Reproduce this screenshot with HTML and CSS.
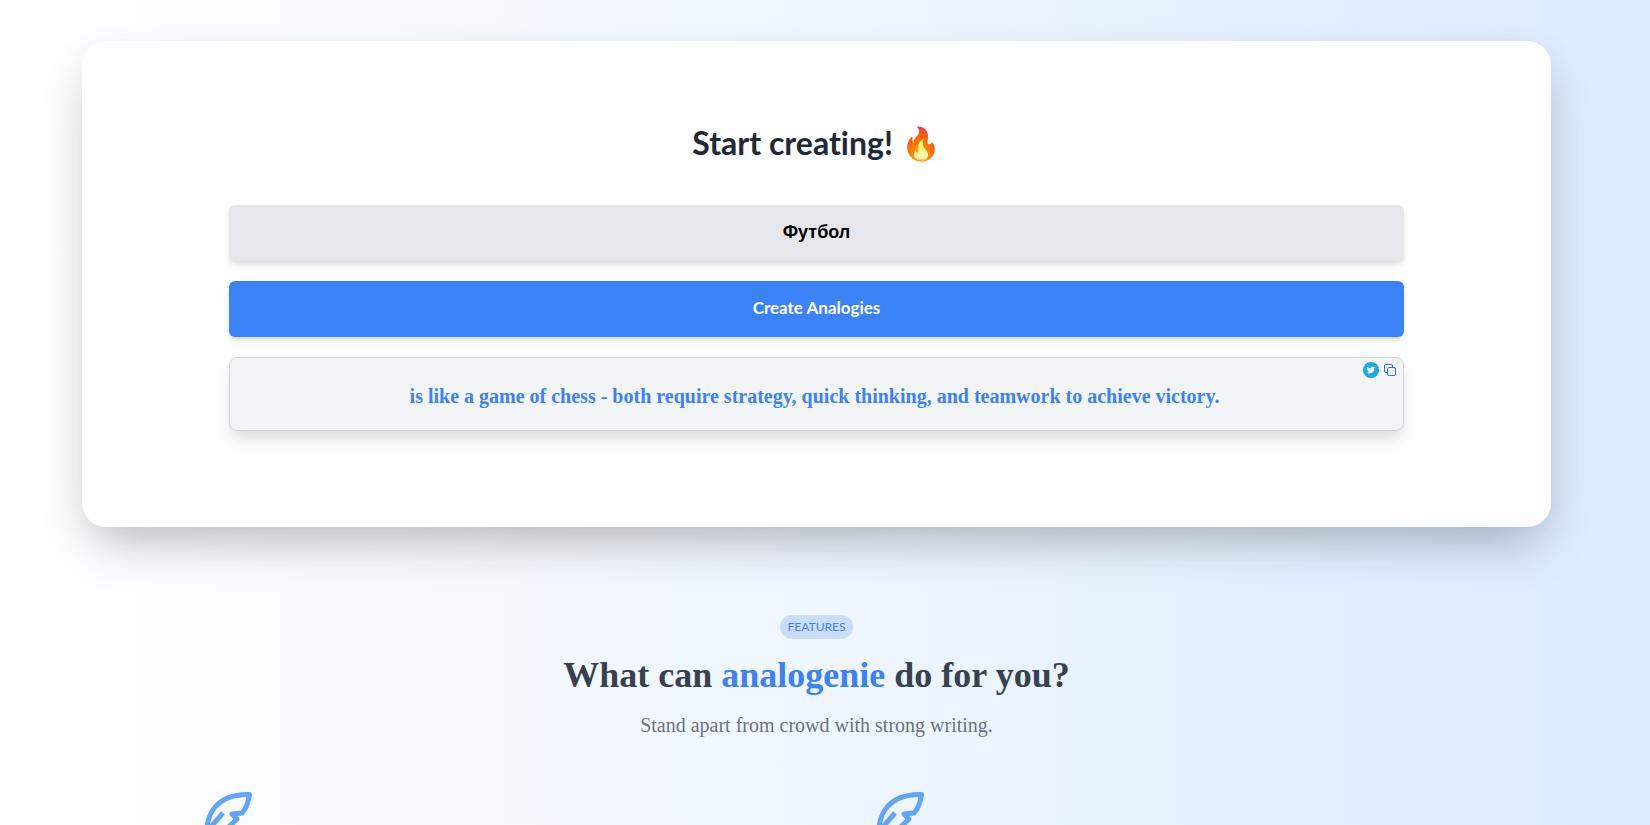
FILE: index.html
```html
<!DOCTYPE html>
<html lang="en">
<head>
    <meta charset="UTF-8">
    <title>analogenie</title>
    <link rel="stylesheet" href="styles.css">
</head>
<body>
    <main class="page">
        <!-- Generator -->
        <form class="creator" id="creator">
            <h2 class="creator-title">Start creating! 🔥</h2>
            <input type="text" class="topic-input" id="topic" aria-label="Topic" value="Футбол">
            <button type="submit" class="create-btn">Create Analogies</button>
            <div class="result">
                <div class="result-actions">
                    <a href="#" aria-label="Tweet">
                        <svg width="16" height="16" viewBox="0 0 16 16">
                            <circle cx="8" cy="8" r="8" fill="#1aa9e6"/>
                            <path fill="#fff" d="M12.2 5.3c-.3.15-.65.24-1 .28.36-.2.63-.55.76-.95-.33.2-.7.34-1.1.42a1.72 1.72 0 0 0-2.95 1.57 4.9 4.9 0 0 1-3.55-1.8 1.72 1.72 0 0 0 .53 2.3c-.28 0-.54-.08-.78-.21 0 .85.6 1.55 1.38 1.7-.25.07-.52.08-.78.03.22.69.86 1.18 1.61 1.2A3.47 3.47 0 0 1 3.8 10.55a4.88 4.88 0 0 0 7.54-4.34c.34-.25.63-.56.86-.91z"/>
                        </svg>
                    </a>
                    <button type="button" class="copy-btn" aria-label="Copy">
                        <svg width="12" height="12" viewBox="0 0 12 12" fill="none" stroke="#3b70d8">
                            <rect x="3.5" y="3.5" width="8" height="8" rx="1.5"/>
                            <path d="M3.5 8.5H2A1.5 1.5 0 0 1 .5 7V2A1.5 1.5 0 0 1 2 .5h5A1.5 1.5 0 0 1 8.5 2v1.5"/>
                        </svg>
                    </button>
                </div>
                <p class="result-text">is like a game of chess - both require strategy, quick thinking, and teamwork to achieve victory.</p>
            </div>
        </form>

        <!-- Features -->
        <section class="features">
            <span class="badge">FEATURES</span>
            <h1 class="features-title">What can <span class="brand">analogenie</span> do for you?</h1>
            <p class="features-text">Stand apart from crowd with strong writing.</p>
            <div class="feature-grid">
                <div class="feature">
                    <svg class="feather" viewBox="0 0 48 48">
                        <path d="M3 46C1 20 14 2 45.500 2.500C44 12 41 18 38 21L28 22L33 27L14 45"/>
                        <path d="M5 37L19 21"/>
                    </svg>
                </div>
                <div class="feature">
                    <svg class="feather" viewBox="0 0 48 48">
                        <path d="M3 46C1 20 14 2 45.500 2.500C44 12 41 18 38 21L28 22L33 27L14 45"/>
                        <path d="M5 37L19 21"/>
                    </svg>
                </div>
            </div>
        </section>
    </main>
</body>
</html>
```
FILE: styles.css
```css
* {
    box-sizing: border-box;
}

body {
    margin: 0;
    height: 100vh;
    overflow: hidden;
    font-family: "Liberation Serif", serif;
    background: linear-gradient(to right, #ffffff, #eff6ff 50%, #dbeafe);
}

.page {
    padding: 41px 17px 0 0;
}

.creator {
    display: flex;
    flex-direction: column;
    gap: 20px;
    width: 90%;
    margin: 0 auto;
    padding: 80px 147px 96px;
    background-color: #fefefe;
    border-radius: 24px;
    box-shadow: 0 25px 50px -12px rgba(0, 0, 0, 0.25), 0 8px 40px rgba(0, 0, 0, 0.04);
}

.creator-title {
    margin: 0 0 20px;
    font-family: Lato, sans-serif;
    font-size: 32px;
    font-variant-ligatures: none;
    line-height: 44px;
    text-align: center;
    color: #1f2937;
}

.topic-input,
.create-btn {
    width: 100%;
    height: 56px;
    border: none;
    border-radius: 6px;
    text-align: center;
    box-shadow: 0 4px 6px -1px rgba(0, 0, 0, 0.15);
}

.topic-input {
    padding: 0 16px 2px;
    background-color: #e5e7eb;
    color: #000;
    font-family: "Liberation Sans", sans-serif;
    font-size: 18px;
    font-weight: bold;
}

.create-btn {
    padding: 0 16px 4px;
    background-color: #3b82f6;
    color: #fff;
    font-family: Lato, sans-serif;
    font-size: 17px;
    font-weight: bold;
    cursor: pointer;
}

.result {
    position: relative;
    padding: 24px 24px 22px;
    border: 1px solid #d1d5db;
    border-radius: 8px;
    background-color: #f3f4f6;
    box-shadow: 0 10px 15px -3px rgba(0, 0, 0, 0.15);
}

.result-actions {
    position: absolute;
    top: 4px;
    right: 7px;
    display: flex;
    align-items: center;
    gap: 5px;
}

.result-actions svg {
    display: block;
}

.copy-btn {
    padding: 0;
    border: none;
    background: none;
    cursor: pointer;
}

.result-text {
    margin: 0;
    padding: 2px 4px 0 0;
    font-size: 20px;
    font-weight: bold;
    line-height: 24px;
    text-align: center;
    color: #3b82f6;
}

.features {
    display: flex;
    flex-direction: column;
    align-items: center;
    padding-top: 88px;
}

.badge {
    padding: 0 8px;
    border-radius: 12px;
    background-color: #c9defc;
    color: #3b82f6;
    font-family: Lato, sans-serif;
    font-size: 12px;
    line-height: 24px;
}

.features-title {
    margin: 16px 0 0;
    font-size: 36px;
    line-height: 40px;
    color: #374151;
}

.brand {
    color: #3b82f6;
}

.features-text {
    margin: 16px 0 0;
    font-size: 20px;
    line-height: 28px;
    color: #6b7280;
}

.feature-grid {
    display: grid;
    grid-template-columns: 1fr 1fr;
    width: 1344px;
    max-width: 90%;
    margin-top: 53px;
}

.feature {
    padding-left: 59px;
}

.feather {
    width: 48px;
    height: 48px;
    fill: none;
    stroke: #60a5fa;
    stroke-width: 5;
    stroke-linejoin: round;
}
```
